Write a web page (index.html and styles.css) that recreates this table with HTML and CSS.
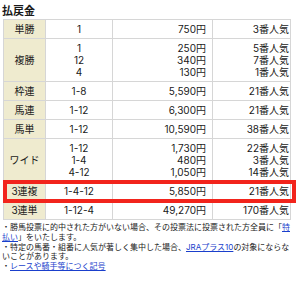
FILE: index.html
```html
<!DOCTYPE html>
<html lang="ja">
<head>
<meta charset="utf-8">
<title>払戻金</title>
<link rel="stylesheet" href="styles.css">
</head>
<body>
<div class="page">
  <h3 class="title">払戻金</h3>
  <div class="tbl-wrap">
    <table class="pay">
      <colgroup>
        <col class="c-kind"><col class="c-num"><col class="c-yen"><col class="c-pop">
      </colgroup>
      <tbody>
        <tr><th>単勝</th><td class="num">1</td><td class="yen">750円</td><td class="pop">3番人気</td></tr>
        <tr><th>複勝</th>
          <td class="num"><div>1</div><div>12</div><div>4</div></td>
          <td class="yen"><div>250円</div><div>340円</div><div>130円</div></td>
          <td class="pop"><div>5番人気</div><div>7番人気</div><div>1番人気</div></td></tr>
        <tr><th>枠連</th><td class="num">1-8</td><td class="yen">5,590円</td><td class="pop">21番人気</td></tr>
        <tr><th>馬連</th><td class="num">1-12</td><td class="yen">6,300円</td><td class="pop">21番人気</td></tr>
        <tr><th>馬単</th><td class="num">1-12</td><td class="yen">10,590円</td><td class="pop">38番人気</td></tr>
        <tr><th>ワイド</th>
          <td class="num"><div>1-12</div><div>1-4</div><div>4-12</div></td>
          <td class="yen"><div>1,730円</div><div>480円</div><div>1,050円</div></td>
          <td class="pop"><div>22番人気</div><div>3番人気</div><div>14番人気</div></td></tr>
        <tr><th>3連複</th><td class="num">1-4-12</td><td class="yen">5,850円</td><td class="pop">21番人気</td></tr>
        <tr><th>3連単</th><td class="num">1-12-4</td><td class="yen">49,270円</td><td class="pop">170番人気</td></tr>
      </tbody>
    </table>
    <div class="highlight"></div>
  </div>
  <ul class="notes">
    <li>・勝馬投票に的中された方がいない場合、その投票法に投票された方全員に「<a href="#">特払い</a>」をいたします。</li>
    <li>・特定の馬番・組番に人気が著しく集中した場合、<a href="#">JRAプラス10</a>の対象にならないことがあります。</li>
    <li>・<a href="#">レースや騎手等につく記号</a></li>
  </ul>
</div>
</body>
</html>
```

FILE: styles.css
```css
html, body {
  margin: 0;
  padding: 0;
  background: #ffffff;
}

body {
  font-family: Inter, "Noto Sans CJK JP", sans-serif;
  color: #1a1a1a;
}

.page {
  padding: 4px 0 0 2px;
}

.title {
  margin: 0;
  font-size: 11px;
  line-height: 14px;
  font-weight: bold;
  color: #1a1a1a;
}

.tbl-wrap {
  position: relative;
  margin: 1px 0 0 1px;
  width: 287px;
}

.pay {
  border-collapse: collapse;
  width: 287px;
  table-layout: fixed;
  font-size: 10px;
  line-height: 12px;
}

.c-kind { width: 42px; }
.c-num { width: 67px; }
.c-yen { width: 100px; }
.c-pop { width: 78px; }

.pay th,
.pay td {
  border: 1px solid #d6d6d6;
  padding: 3px 0;
  vertical-align: middle;
}

.pay th {
  background: #efebcf;
  font-weight: normal;
  text-align: center;
}

.pay .num {
  text-align: center;
}

.pay .yen {
  text-align: right;
  padding-right: 6px;
}

.pay .pop {
  text-align: right;
  padding-right: 1px;
}

.highlight {
  position: absolute;
  left: 0;
  top: 161px;
  width: 285px;
  height: 15px;
  border: 4px solid #f2241c;
  pointer-events: none;
}

.notes {
  list-style: none;
  margin: 3px 0 0 0;
  padding: 0;
  width: 290px;
  font-size: 8px;
  line-height: 9.8px;
  color: #1a1a1a;
}

.notes a {
  color: #1a3fcc;
  text-decoration: underline;
}
```
